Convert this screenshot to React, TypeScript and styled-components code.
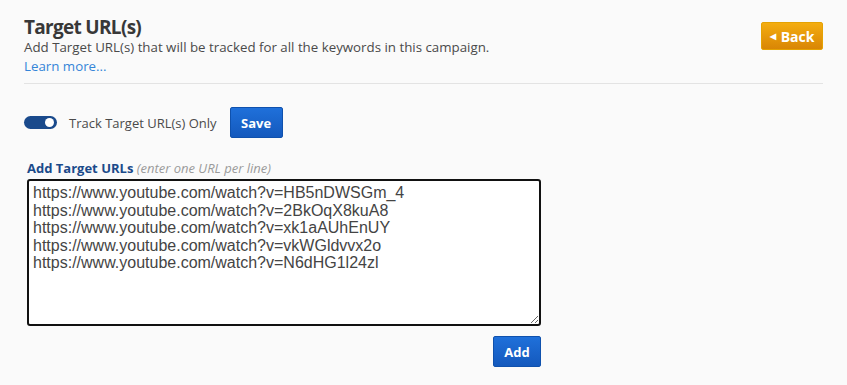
import { useEffect, useRef } from 'react';
import styled, { createGlobalStyle } from 'styled-components';

const GlobalStyle = createGlobalStyle`
    html, body {
        margin: 0;
        background: #fafafa;
    }
    body {
        font-family: 'Open Sans', 'Liberation Sans', sans-serif;
        color: #333;
    }
`;

const Page = styled.div`
    padding: 16px 24px 0 24px;
`;

const Header = styled.div`
    display: flex;
    justify-content: space-between;
    align-items: flex-start;
    padding-bottom: 8px;
    border-bottom: 1px solid #e3e3e3;
`;

const Title = styled.h2`
    margin: 0;
    font-size: 19px;
    line-height: 22px;
    font-weight: 700;
    letter-spacing: -0.7px;
    color: #383838;
`;

const Description = styled.p`
    margin: 0;
    font-size: 13.3px;
    line-height: 18.5px;
    color: #4a4a4a;
`;

const LearnMore = styled.a`
    display: block;
    font-size: 13.3px;
    line-height: 18.5px;
    color: #3585d8;
    text-decoration: none;
`;

const Button = styled.button<{ $variant?: 'blue' | 'orange' }>`
    font-family: 'Open Sans', 'Liberation Sans', sans-serif;
    font-weight: 700;
    color: #fff;
    border-radius: 2px;
    cursor: pointer;
    display: inline-flex;
    align-items: center;
    justify-content: center;
    gap: 5px;
    padding: 0;
    background: ${p =>
        p.$variant === 'orange'
            ? 'linear-gradient(#f4ad10, #d98605)'
            : 'linear-gradient(#1f70da, #1459bd)'};
    border: 1px solid ${p => (p.$variant === 'orange' ? '#e5a203' : '#0f51ad')};
`;

const BackButton = styled(Button)`
    width: 62px;
    height: 28px;
    margin-top: 6px;
    font-size: 14px;
`;

const Caret = styled.span`
    font-size: 8px;
    line-height: 1;
`;

const SaveButton = styled(Button)`
    width: 53px;
    height: 31px;
    font-size: 13px;
`;

const AddButton = styled(Button)`
    width: 48px;
    height: 31px;
    font-size: 13px;
`;

const ToggleRow = styled.div`
    display: flex;
    align-items: center;
    margin-top: 23px;
`;

const Toggle = styled.span<{ $on: boolean }>`
    position: relative;
    width: 33px;
    height: 13px;
    border-radius: 7px;
    background: ${p => (p.$on ? '#1a4a8c' : '#bbb')};
    flex-shrink: 0;

    &::after {
        content: '';
        position: absolute;
        top: 2px;
        left: ${p => (p.$on ? '21px' : '2px')};
        width: 9px;
        height: 9px;
        border-radius: 50%;
        background: #fff;
    }
`;

const ToggleLabel = styled.span`
    font-size: 13px;
    color: #4a4a4a;
    margin-left: 12px;
    margin-right: 13px;
`;

const UrlSection = styled.div`
    width: 514px;
    margin-left: 3px;
    margin-top: 21px;
    display: flex;
    flex-direction: column;
`;

const FieldLabel = styled.label`
    font-size: 13px;
    line-height: 18px;
    font-weight: 700;
    color: #1b4a8a;

    em {
        font-weight: 400;
        color: #9a9a9a;
    }
`;

const UrlInput = styled.textarea`
    box-sizing: border-box;
    width: 514px;
    height: 147px;
    margin-top: 2px;
    border: 2px solid #111;
    border-radius: 3px;
    outline: none;
    background: #fff;
    padding: 3px 4px;
    font-family: 'Liberation Sans', Arial, sans-serif;
    font-size: 16px;
    line-height: 17.5px;
    color: #444;
    caret-color: #222;
`;

const Actions = styled.div`
    display: flex;
    justify-content: flex-end;
    margin-top: 10px;
`;

const urls = [
    'https://www.youtube.com/watch?v=HB5nDWSGm_4',
    'https://www.youtube.com/watch?v=2BkOqX8kuA8',
    'https://www.youtube.com/watch?v=xk1aAUhEnUY',
    'https://www.youtube.com/watch?v=vkWGldvvx2o',
    'https://www.youtube.com/watch?v=N6dHG1l24zl',
];

export default function App() {
    const inputRef = useRef<HTMLTextAreaElement>(null);

    useEffect(() => {
        const el = inputRef.current;
        if (!el) return;
        el.focus();
        el.setSelectionRange(el.value.length, el.value.length);
    }, []);

    return (
        <>
            <GlobalStyle />
            <Page>
                <Header>
                    <div>
                        <Title>Target URL(s)</Title>
                        <Description>
                            Add Target URL(s) that will be tracked for all the keywords in this campaign.
                        </Description>
                        <LearnMore href="#">Learn more...</LearnMore>
                    </div>
                    <BackButton $variant="orange">
                        <Caret>◀</Caret>Back
                    </BackButton>
                </Header>
                <ToggleRow>
                    <Toggle $on />
                    <ToggleLabel>Track Target URL(s) Only</ToggleLabel>
                    <SaveButton>Save</SaveButton>
                </ToggleRow>
                <UrlSection>
                    <FieldLabel>
                        Add Target URLs <em>(enter one URL per line)</em>
                    </FieldLabel>
                    <UrlInput
                        ref={inputRef}
                        defaultValue={urls.join('\n') + '\n'}
                        spellCheck={false}
                    />
                    <Actions>
                        <AddButton>Add</AddButton>
                    </Actions>
                </UrlSection>
            </Page>
        </>
    );
}
